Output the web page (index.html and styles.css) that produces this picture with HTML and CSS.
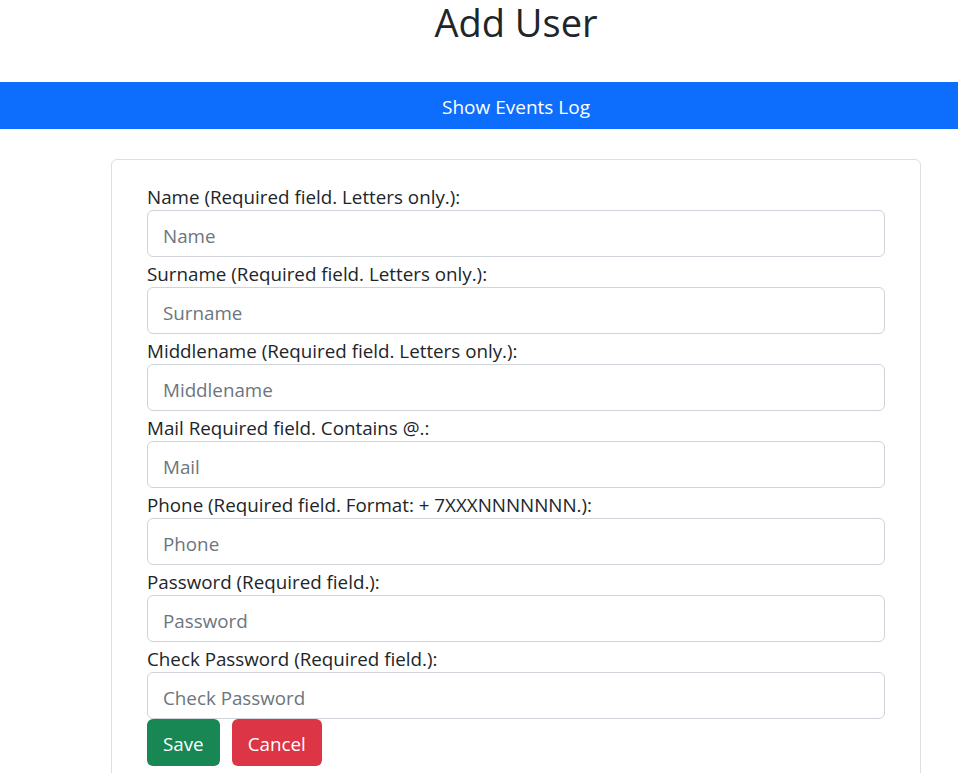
FILE: index.html
```html
<!DOCTYPE html>
<html lang="en">
<head>
<meta charset="utf-8">
<title>Add User</title>
<link rel="stylesheet" href="styles.css">
</head>
<body>
<div class="page">
  <h1 class="title">Add User</h1>
  <button class="events-btn" type="button">Show Events Log</button>
  <div class="card">
    <form class="user-form">
      <label class="field-label" for="name">Name (Required field. Letters only.):</label>
      <input class="field-input" id="name" type="text" placeholder="Name">
      <label class="field-label" for="surname">Surname (Required field. Letters only.):</label>
      <input class="field-input" id="surname" type="text" placeholder="Surname">
      <label class="field-label" for="middlename">Middlename (Required field. Letters only.):</label>
      <input class="field-input" id="middlename" type="text" placeholder="Middlename">
      <label class="field-label" for="mail">Mail Required field. Contains @.:</label>
      <input class="field-input" id="mail" type="text" placeholder="Mail">
      <label class="field-label" for="phone">Phone (Required field. Format: + 7XXXNNNNNNN.):</label>
      <input class="field-input" id="phone" type="text" placeholder="Phone">
      <label class="field-label" for="password">Password (Required field.):</label>
      <input class="field-input" id="password" type="password" placeholder="Password">
      <label class="field-label" for="check">Check Password (Required field.):</label>
      <input class="field-input" id="check" type="password" placeholder="Check Password">
      <div class="actions">
        <button class="btn btn-save" type="button">Save</button>
        <button class="btn btn-cancel" type="button">Cancel</button>
      </div>
    </form>
  </div>
</div>
</body>
</html>
```

FILE: styles.css
```css
html, body {
  margin: 0;
  padding: 0;
  overflow: hidden;
  background: #fff;
}

body {
  font-family: "Open Sans", "Noto Sans", sans-serif;
  color: #212529;
}

.page {
  display: flex;
  flex-direction: column;
  align-items: stretch;
}

.title {
  margin: 0 0 0 74px;
  height: 82px;
  text-align: center;
  font-size: 38px;
  font-weight: 400;
  line-height: 44px;
}

.events-btn {
  display: block;
  width: 100%;
  height: 47px;
  margin: 0;
  border: 0;
  background: #0d6efd;
  color: #fff;
  font-family: inherit;
  font-size: 19px;
  line-height: 43px;
  padding: 4px 0 0 74px;
  text-align: center;
}

.card {
  margin: 30px 37px 0 111px;
  border: 1px solid #dfdfdf;
  border-radius: 6px;
  padding: 20px 35px 40px;
}

.user-form {
  display: flex;
  flex-direction: column;
}

.field-label {
  display: block;
  height: 28px;
  padding-top: 2px;
  font-size: 18.8px;
  line-height: 30px;
}

.field-input {
  display: block;
  box-sizing: border-box;
  width: 100%;
  height: 47px;
  margin: 0;
  padding: 4px 15px 0;
  border: 1px solid #ced4da;
  border-radius: 6px;
  font-family: inherit;
  font-size: 18.8px;
  color: #212529;
  background: #fff;
}

.field-input::placeholder {
  color: #6c757d;
}

.actions {
  display: flex;
  gap: 12px;
}

.btn {
  height: 47px;
  padding: 2px 16px 0;
  border: 0;
  border-radius: 6px;
  font-family: inherit;
  font-size: 18.8px;
  color: #fff;
}

.btn-save {
  background: #198754;
}

.btn-cancel {
  background: #dc3545;
}
```
